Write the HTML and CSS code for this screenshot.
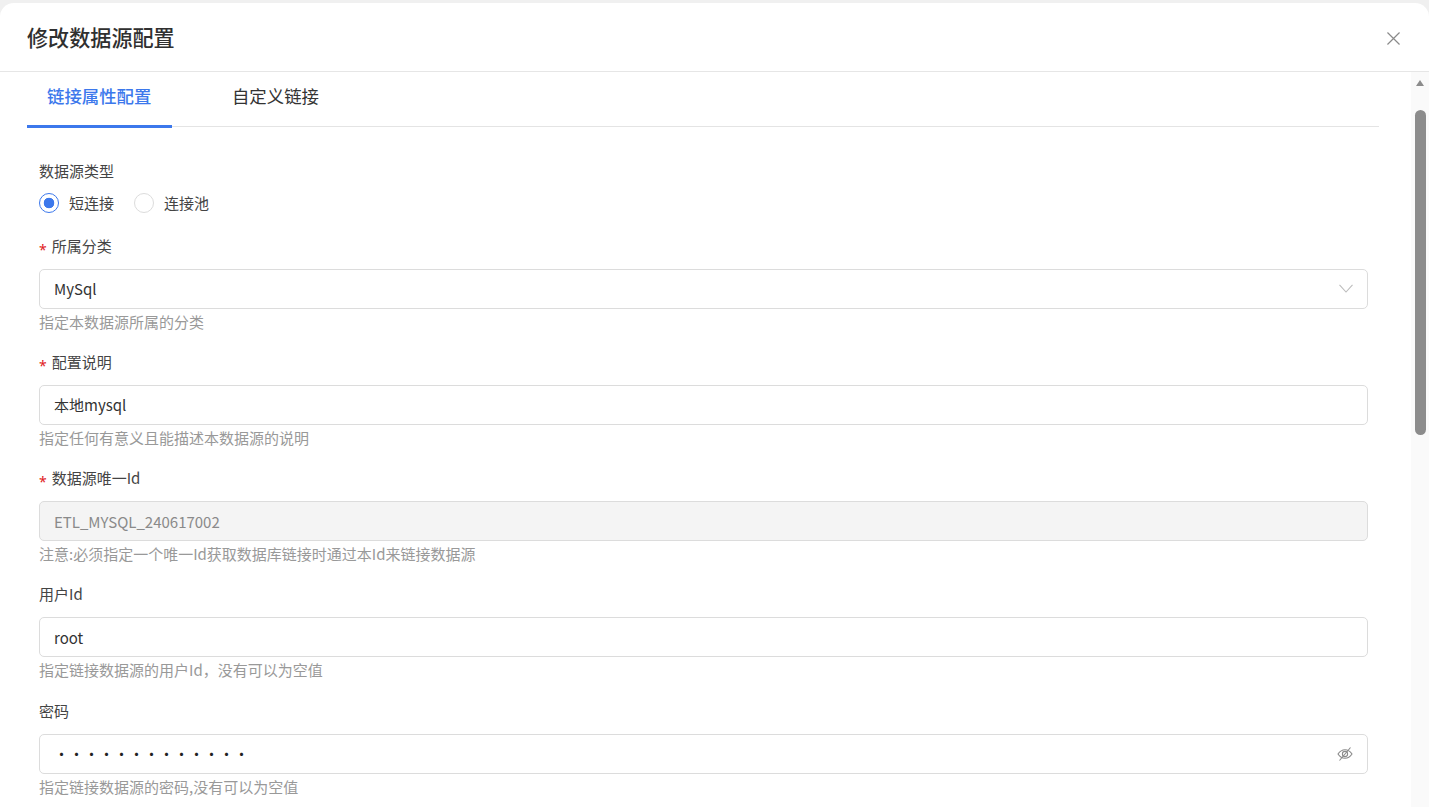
FILE: index.html
```html
<!DOCTYPE html>
<html lang="zh-CN">
<head>
    <meta charset="UTF-8">
    <title>修改数据源配置</title>
    <link rel="stylesheet" href="styles.css">
</head>
<body>
    <div class="dialog">
        <div class="dialog-header">
            <h2 class="dialog-title">修改数据源配置</h2>
            <svg class="close-icon" width="13" height="13" viewBox="0 0 14 14"><path d="M0.5 0.5L13.5 13.5M13.5 0.5L0.5 13.5" fill="none" stroke="#8a8a8a" stroke-width="1.3"/></svg>
        </div>
        <div class="dialog-body">
            <div class="content">
                <div class="tabs">
                    <div class="tab active">链接属性配置</div>
                    <div class="tab">自定义链接</div>
                </div>
                <div class="form">
                    <div class="form-item">
                        <div class="label">数据源类型</div>
                        <div class="radio-group">
                            <div class="radio checked"><span class="radio-dot"></span>短连接</div>
                            <div class="radio"><span class="radio-dot"></span>连接池</div>
                        </div>
                    </div>
                    <div class="form-item">
                        <div class="label required">所属分类</div>
                        <div class="input">
                            <span>MySql</span>
                            <svg class="arrow-icon" width="14" height="9" viewBox="0 0 14 9"><path d="M0.5 0.8L7 8L13.500 0.8" fill="none" stroke="#bdbdbd" stroke-width="1.1"/></svg>
                        </div>
                        <div class="hint">指定本数据源所属的分类</div>
                    </div>
                    <div class="form-item">
                        <div class="label required">配置说明</div>
                        <div class="input"><span>本地mysql</span></div>
                        <div class="hint">指定任何有意义且能描述本数据源的说明</div>
                    </div>
                    <div class="form-item">
                        <div class="label required">数据源唯一Id</div>
                        <div class="input disabled"><span>ETL_MYSQL_240617002</span></div>
                        <div class="hint">注意:必须指定一个唯一Id获取数据库链接时通过本Id来链接数据源</div>
                    </div>
                    <div class="form-item">
                        <div class="label">用户Id</div>
                        <div class="input"><span>root</span></div>
                        <div class="hint">指定链接数据源的用户Id，没有可以为空值</div>
                    </div>
                    <div class="form-item">
                        <div class="label">密码</div>
                        <div class="input">
                            <span class="password">•••••••••••••</span>
                            <svg width="16" height="16" viewBox="0 0 16 16" fill="none" stroke="#8a8a8a" stroke-width="1.1"><path d="M1 8C3 5 5.300 3.700 8 3.700S13 5 15 8C13 11 10.700 12.300 8 12.300S3 11 1 8Z"/><circle cx="8" cy="8" r="2.600"/><path d="M2.500 14.500L13.500 1.500"/></svg>
                        </div>
                        <div class="hint">指定链接数据源的密码,没有可以为空值</div>
                    </div>
                </div>
            </div>
            <div class="scrollbar">
                <span class="scroll-arrow"></span>
                <div class="scroll-thumb"></div>
            </div>
        </div>
    </div>
</body>
</html>
```

FILE: styles.css
```css
html, body {
    height: 100%;
}
body {
    margin: 0;
    overflow: hidden;
    background: #f0f0f0;
    color: #333;
    font-family: "Noto Sans CJK SC", "Noto Sans", sans-serif;
    padding-top: 3px;
    box-sizing: border-box;
}
.dialog {
    height: 804px;
    background: #fff;
    border-radius: 14px 14px 0 0;
    overflow: hidden;
}
.dialog-header {
    height: 69px;
    box-sizing: border-box;
    border-bottom: 1px solid #e6e6e6;
    padding: 0 29px 0 27px;
    display: flex;
    align-items: center;
    justify-content: space-between;
}
.dialog-title {
    margin: 0;
    font-size: 21.1px;
    font-weight: 500;
    color: #303030;
}
.close-icon {
    display: block;
    position: relative;
    top: 1px;
}
.dialog-body {
    display: flex;
    height: 735px;
    overflow: hidden;
}
.content {
    flex: 1;
    padding: 0 32px 0 27px;
}
.tabs {
    display: flex;
    gap: 40px;
    height: 54px;
    border-bottom: 1px solid #e4e4e4;
}
.tab {
    height: 56px;
    box-sizing: border-box;
    padding: 0 20px 8px;
    font-size: 17.4px;
    line-height: 48px;
    color: #333;
}
.tab.active {
    color: #3c78ec;
    font-weight: 500;
    border-bottom: 3px solid #3c78ec;
    padding: 0 20.6px 5px 20px;
}
.form {
    padding: 32px 11px 0 12px;
}
.form-item {
    margin-bottom: 15.25px;
}
.label {
    height: 24px;
    font-size: 15px;
    line-height: 24px;
    color: #444;
    margin-bottom: 11px;
}
.label.required::before {
    content: "*";
    font-family: "Noto Sans", sans-serif;
    color: #e02020;
    margin-right: 5px;
    font-size: 14px;
    vertical-align: -3px;
}
.radio-group {
    display: flex;
    gap: 20px;
    margin-top: -2px;
    margin-bottom: 19.6px;
}
.radio {
    display: flex;
    align-items: center;
    gap: 10px;
    font-size: 15px;
    line-height: 22px;
    color: #444;
}
.radio-dot {
    width: 20px;
    height: 20px;
    box-sizing: border-box;
    border: 1px solid #dcdcdc;
    border-radius: 50%;
}
.radio.checked .radio-dot {
    border-color: #3c78ec;
    background: radial-gradient(circle, #3c78ec 0, #3c78ec 5px, #fff 5.6px);
}
.input {
    height: 40px;
    box-sizing: border-box;
    border: 1px solid #dcdcdc;
    border-radius: 5px;
    padding: 0 14px;
    display: flex;
    align-items: center;
    justify-content: space-between;
    font-size: 15px;
    color: #333;
}
.input.disabled {
    background: #f4f4f4;
    color: #8a8a8a;
}
.arrow-icon {
    margin-bottom: 1px;
}
.password {
    color: #222;
}
.hint {
    font-size: 15px;
    line-height: 26px;
    color: #999;
}
.scrollbar {
    width: 18px;
    flex: none;
    background: #fafafa;
    display: flex;
    flex-direction: column;
    align-items: center;
}
.scroll-arrow {
    margin-top: 8px;
    border-left: 4.5px solid transparent;
    border-right: 4.5px solid transparent;
    border-bottom: 6px solid #8c8c8c;
}
.scroll-thumb {
    margin-top: 24px;
    width: 11px;
    height: 325px;
    border-radius: 6px;
    background: #8c8c8c;
}
```
